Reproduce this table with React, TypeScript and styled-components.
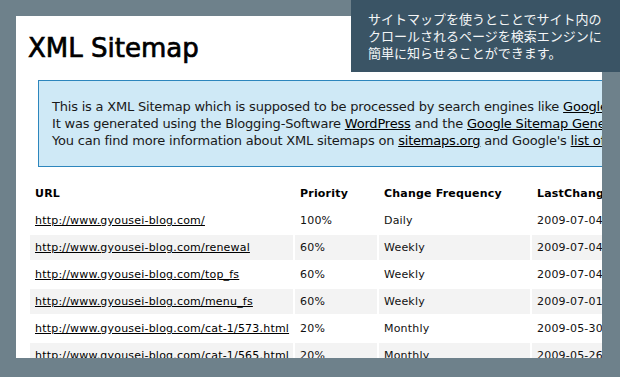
import React from "react";
import styled, { createGlobalStyle } from "styled-components";

const GlobalStyle = createGlobalStyle`
  html, body {
    margin: 0;
    padding: 0;
    background: #6e818b;
  }
  body {
    width: 620px;
    height: 377px;
    overflow: hidden;
    position: relative;
    font-family: "DejaVu Sans", "Liberation Sans", sans-serif;
  }
`;

const Backdrop = styled.div`
  padding: 16px 0 0 16px;
`;

const Panel = styled.div`
  width: 586px;
  height: 342px;
  background: #ffffff;
  overflow: hidden;
`;

const Page = styled.div`
  width: 900px;
  padding: 17px 0 0 12px;
  color: #111;
`;

const Title = styled.h1`
  margin: 0;
  font-size: 26px;
  line-height: 30px;
  font-weight: normal;
  -webkit-text-stroke: 0.7px #000;
  color: #000;
`;

const Intro = styled.div`
  margin: 17px 0 0 10px;
  width: 700px;
  padding: 17px 13px 17px;
  background: #cfe9f6;
  border: 1px solid #2d86bd;
  font-size: 13px;
  line-height: 17px;
  letter-spacing: -0.2px;
  color: #1a1a1a;
  white-space: nowrap;
`;

const Link = styled.a`
  color: #000;
  text-decoration: underline;
`;

const Table = styled.table`
  margin-top: 12px;
  width: 656px;
  border-collapse: separate;
  border-spacing: 2px;
  font-size: 11px;
  letter-spacing: 0.2px;
  table-layout: fixed;
`;

const HeadCell = styled.th<{ $w: number }>`
  width: ${(p) => p.$w}px;
  height: 25px;
  padding: 0 5px;
  box-sizing: border-box;
  text-align: left;
  font-weight: bold;
  color: #000;
  white-space: nowrap;
`;

const Row = styled.tr<{ $odd: boolean }>`
  background: ${(p) => (p.$odd ? "#f3f3f3" : "#ffffff")};
`;

const Cell = styled.td`
  height: 25px;
  padding: 0 5px;
  box-sizing: border-box;
  white-space: nowrap;
  color: #111;
`;

const Tip = styled.div`
  position: absolute;
  top: 0;
  right: 0;
  width: 269px;
  height: 72px;
  box-sizing: border-box;
  padding: 10px 0 0 17px;
  background: #3a5465;
  color: #f4f6f7;
  font-family: "Noto Sans CJK JP", sans-serif;
  font-size: 13px;
  line-height: 17px;
  white-space: nowrap;
`;

const rows = [
  ["http://www.gyousei-blog.com/", "100%", "Daily", "2009-07-04"],
  ["http://www.gyousei-blog.com/renewal", "60%", "Weekly", "2009-07-04"],
  ["http://www.gyousei-blog.com/top_fs", "60%", "Weekly", "2009-07-04"],
  ["http://www.gyousei-blog.com/menu_fs", "60%", "Weekly", "2009-07-01"],
  ["http://www.gyousei-blog.com/cat-1/573.html", "20%", "Monthly", "2009-05-30"],
  ["http://www.gyousei-blog.com/cat-1/565.html", "20%", "Monthly", "2009-05-26"],
];

export default function App() {
  return (
    <>
      <GlobalStyle />
      <Backdrop>
        <Panel>
          <Page>
            <Title>XML Sitemap</Title>
            <Intro>
              This is a XML Sitemap which is supposed to be processed by search engines like{" "}
              <Link href="#">Google</Link>, <Link href="#">MSN Search</Link> and{" "}
              <Link href="#">YAHOO</Link>.
              <br />
              It was generated using the Blogging-Software <Link href="#">WordPress</Link> and
              the <Link href="#">Google Sitemap Generator Plugin</Link> by{" "}
              <Link href="#">Arne Brachhold</Link>.
              <br />
              You can find more information about XML sitemaps on{" "}
              <Link href="#">sitemaps.org</Link> and Google's{" "}
              <Link href="#">list of sitemap programs</Link>.
            </Intro>
            <Table>
              <thead>
                <tr>
                  <HeadCell $w={263}>URL</HeadCell>
                  <HeadCell $w={82}>Priority</HeadCell>
                  <HeadCell $w={151}>Change Frequency</HeadCell>
                  <HeadCell $w={150}>LastChange (GMT)</HeadCell>
                </tr>
              </thead>
              <tbody>
                {rows.map((r, i) => (
                  <Row key={r[0]} $odd={i % 2 === 1}>
                    <Cell>
                      <Link href="#">{r[0]}</Link>
                    </Cell>
                    <Cell>{r[1]}</Cell>
                    <Cell>{r[2]}</Cell>
                    <Cell>{r[3]} 09:14</Cell>
                  </Row>
                ))}
              </tbody>
            </Table>
          </Page>
        </Panel>
      </Backdrop>
      <Tip>
        サイトマップを使うとことでサイト内の
        <br />
        クロールされるページを検索エンジンに
        <br />
        簡単に知らせることができます。
      </Tip>
    </>
  );
}
